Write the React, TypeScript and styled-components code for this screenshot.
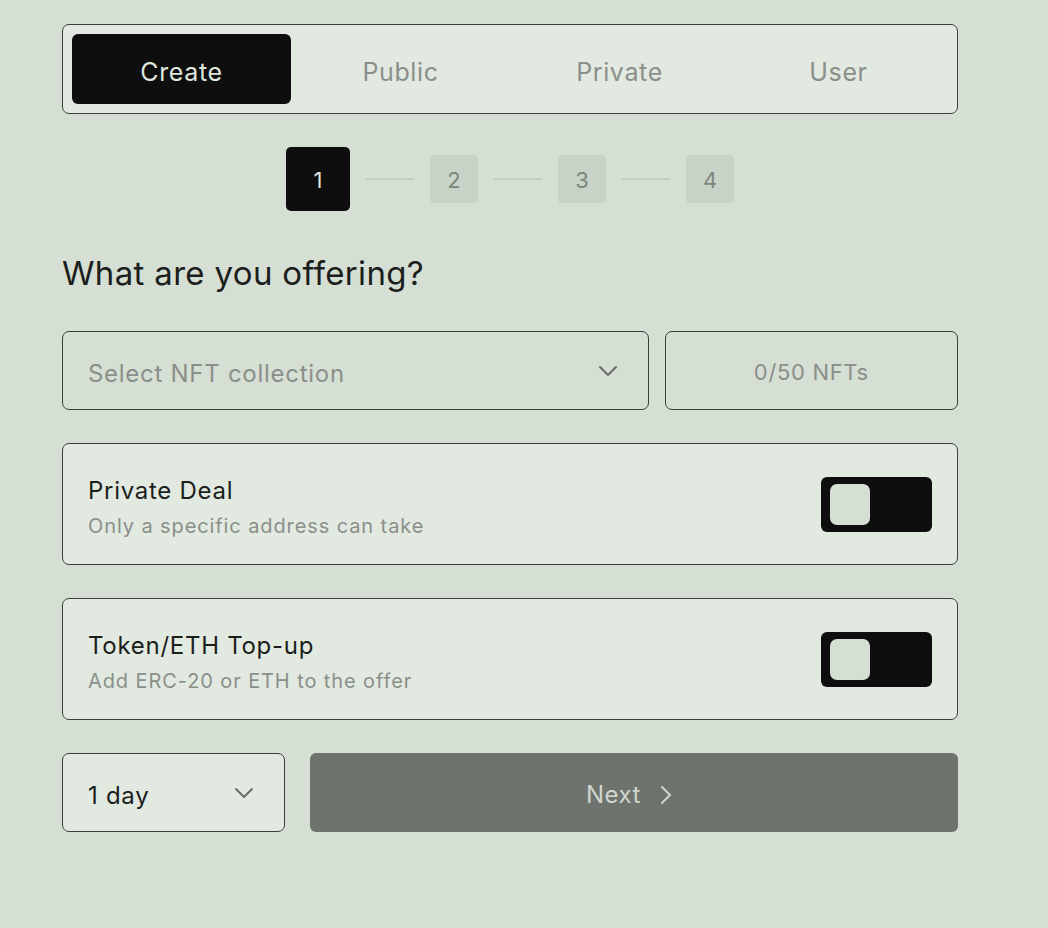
import React, { useState } from "react";
import styled, { createGlobalStyle } from "styled-components";

const Global = createGlobalStyle`
  html, body { margin: 0; padding: 0; background: #d5dfd4; }
  body { font-family: Inter, "Liberation Sans", sans-serif; color: #1c1e1c; }
  * { box-sizing: border-box; }
`;

const Page = styled.div`
  width: 896px;
  margin-left: 62px;
  padding-top: 24px;
  padding-bottom: 96px;
  display: flex;
  flex-direction: column;
`;

const Tabs = styled.div`
  height: 90px;
  display: grid;
  grid-template-columns: repeat(4, 1fr);
  padding: 9px;
  background: #e1e9e0;
  border: 1.5px solid #3b3e3b;
  border-radius: 7px;
`;

const Tab = styled.button<{ $active?: boolean }>`
  border: none;
  border-radius: 6px;
  padding: 5px 0 0;
  font-family: inherit;
  font-size: 25px;
  letter-spacing: 0.025em;
  background: ${(p) => (p.$active ? "#0e0e0e" : "transparent")};
  color: ${(p) => (p.$active ? "#dfe6de" : "#8b8f8a")};
  cursor: pointer;
`;

const Stepper = styled.div`
  margin-top: 33px;
  display: flex;
  align-items: center;
  justify-content: center;
  gap: 16px;
`;

const Step = styled.div<{ $active?: boolean }>`
  width: ${(p) => (p.$active ? 64 : 48)}px;
  height: ${(p) => (p.$active ? 64 : 48)}px;
  border-radius: ${(p) => (p.$active ? 5 : 4)}px;
  background: ${(p) => (p.$active ? "#0e0e0e" : "#c8d3c7")};
  color: ${(p) => (p.$active ? "#dfe6de" : "#7f857e")};
  display: flex;
  align-items: center;
  justify-content: center;
  padding-top: 2px;
  font-size: 22px;
`;

const StepLine = styled.div`
  width: 48px;
  height: 2px;
  background: #c3cdc2;
`;

const Heading = styled.h2`
  margin: 40px 0 0;
  font-size: 33px;
  line-height: 44px;
  font-weight: 400;
  letter-spacing: 0.01em;
  color: #1c1e1c;
`;

const SelectRow = styled.div`
  margin-top: 36px;
  display: grid;
  grid-template-columns: 2fr 1fr;
  gap: 16px;
`;

const Field = styled.div<{ $light?: boolean; $center?: boolean }>`
  height: 79px;
  border: 1.5px solid #3b3e3b;
  border-radius: 7px;
  background: ${(p) => (p.$light ? "#e1e9e0" : "transparent")};
  display: flex;
  align-items: center;
  justify-content: ${(p) => (p.$center ? "center" : "space-between")};
  padding: ${(p) => (p.$center ? "0" : "0 24px 0 25px")};
`;

const FieldText = styled.span<{ $dark?: boolean; $size?: number }>`
  padding-top: ${(p) => (p.$size ? 2 : 5)}px;
  font-size: ${(p) => p.$size ?? 24}px;
  color: ${(p) => (p.$dark ? "#1c1e1c" : "#8b8f8a")};
  letter-spacing: 0.03em;
`;

const Card = styled.div`
  margin-top: 33px;
  height: 122px;
  border: 1.5px solid #3b3e3b;
  border-radius: 7px;
  background: #e1e9e0;
  display: flex;
  align-items: center;
  justify-content: space-between;
  padding: 0 25px;
`;

const CardText = styled.div`
  display: flex;
  flex-direction: column;
  gap: 9px;
  padding-top: 6px;
`;

const CardTitle = styled.div`
  font-size: 24px;
  color: #1c1e1c;
  letter-spacing: 0.03em;
`;

const CardSub = styled.div`
  font-size: 20px;
  color: #8b8f8a;
  letter-spacing: 0.045em;
`;

const Toggle = styled.button`
  width: 111px;
  height: 55px;
  border: none;
  border-radius: 6px;
  background: #0e0e0e;
  padding: 0 0 0 9px;
  display: flex;
  align-items: center;
  cursor: pointer;
`;

const Knob = styled.span`
  width: 40px;
  height: 41px;
  border-radius: 7px;
  background: #d5dfd4;
`;

const BottomRow = styled.div`
  margin-top: 33px;
  display: grid;
  grid-template-columns: 223px 1fr;
  gap: 25px;
`;

const NextButton = styled.button`
  height: 79px;
  border: none;
  border-radius: 6px;
  background: #6f736e;
  color: #cfd6ce;
  font-family: inherit;
  font-size: 24px;
  letter-spacing: 0.02em;
  display: flex;
  align-items: center;
  justify-content: center;
  gap: 9px;
  padding: 4px 0 0 0;
  cursor: pointer;
`;

const Chevron = ({ color = "#6a6e69", size = 32 }: { color?: string; size?: number }) => (
  <svg width={size} height={size} viewBox="0 0 24 24" fill="none" stroke={color} strokeWidth={1.5} strokeLinecap="round" strokeLinejoin="round">
    <path d="m6 9 6 6 6-6" />
  </svg>
);

const ChevronRight = () => (
  <svg width={32} height={32} viewBox="0 0 24 24" fill="none" stroke="#cfd6ce" strokeWidth={1.5} strokeLinecap="round" strokeLinejoin="round">
    <path d="m9 6 6 6-6 6" />
  </svg>
);

export default function App() {
  const [tab, setTab] = useState("Create");
  const tabs = ["Create", "Public", "Private", "User"];
  return (
    <>
      <Global />
      <Page>
        <Tabs>
          {tabs.map((t) => (
            <Tab key={t} $active={t === tab} onClick={() => setTab(t)}>
              {t}
            </Tab>
          ))}
        </Tabs>
        <Stepper>
          <Step $active>1</Step>
          <StepLine />
          <Step>2</Step>
          <StepLine />
          <Step>3</Step>
          <StepLine />
          <Step>4</Step>
        </Stepper>
        <Heading>What are you offering?</Heading>
        <SelectRow>
          <Field>
            <FieldText>Select NFT collection</FieldText>
            <Chevron />
          </Field>
          <Field $center>
            <FieldText $size={22}>0/50 NFTs</FieldText>
          </Field>
        </SelectRow>
        <Card>
          <CardText>
            <CardTitle>Private Deal</CardTitle>
            <CardSub>Only a specific address can take</CardSub>
          </CardText>
          <Toggle aria-label="Private Deal">
            <Knob />
          </Toggle>
        </Card>
        <Card>
          <CardText>
            <CardTitle>Token/ETH Top-up</CardTitle>
            <CardSub>Add ERC-20 or ETH to the offer</CardSub>
          </CardText>
          <Toggle aria-label="Token/ETH Top-up">
            <Knob />
          </Toggle>
        </Card>
        <BottomRow>
          <Field $light>
            <FieldText $dark>1 day</FieldText>
            <Chevron />
          </Field>
          <NextButton>
            Next
            <ChevronRight />
          </NextButton>
        </BottomRow>
      </Page>
    </>
  );
}
